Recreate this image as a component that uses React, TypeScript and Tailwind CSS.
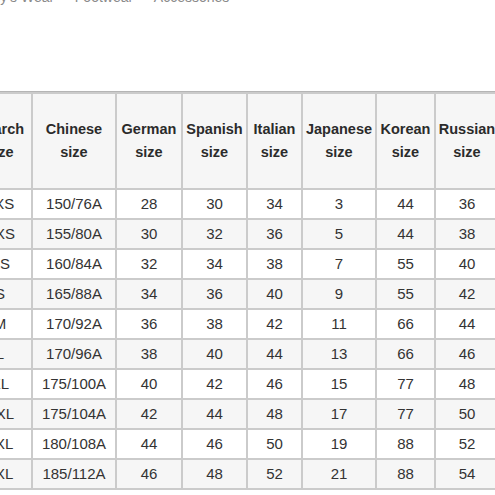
import React from 'react';

const headers = [
  ['Search', 'size'],
  ['Chinese', 'size'],
  ['German', 'size'],
  ['Spanish', 'size'],
  ['Italian', 'size'],
  ['Japanese', 'size'],
  ['Korean', 'size'],
  ['Russian', 'size'],
];

const rows = [
  ['3XS', '150/76A', '28', '30', '34', '3', '44', '36'],
  ['XXS', '155/80A', '30', '32', '36', '5', '44', '38'],
  ['XS', '160/84A', '32', '34', '38', '7', '55', '40'],
  ['S', '165/88A', '34', '36', '40', '9', '55', '42'],
  ['M', '170/92A', '36', '38', '42', '11', '66', '44'],
  ['L', '170/96A', '38', '40', '44', '13', '66', '46'],
  ['XL', '175/100A', '40', '42', '46', '15', '77', '48'],
  ['XXL', '175/104A', '42', '44', '48', '17', '77', '50'],
  ['3XL', '180/108A', '44', '46', '50', '19', '88', '52'],
  ['4XL', '185/112A', '46', '48', '52', '21', '88', '54'],
];

export default function App() {
  return (
    <div className="w-[495px] h-[495px] overflow-hidden bg-white text-[#333] font-['Liberation_Sans',Arial,sans-serif]">
      {/* page is scrolled a little to the right */}
      <div className="-ml-[33px] w-[560px]">
        {/* breadcrumb */}
        <div className="-mt-[13px] pl-[10px] text-[14px] leading-5 text-[#8a8a8a] flex">
          <span>Lady's Wear</span>
          <span className="px-2">·</span>
          <span>Footwear</span>
          <span className="px-2">·</span>
          <span>Accessories</span>
        </div>

        {/* size table */}
        <div className="mt-[84px] grid grid-cols-[62px_82px_64px_63px_53px_72px_57px_62px] gap-[2px] p-[2px] border-t border-[#b5b5b5] bg-[#cbcbcb] w-max">
          {headers.map(([a, b]) => (
            <div
              key={a}
              className="h-[94px] bg-[#f6f6f6] flex flex-col items-center justify-center text-[14.5px] leading-[23px] font-bold text-[#2b2b2b]"
            >
              <span>{a}</span>
              <span>{b}</span>
            </div>
          ))}
          {rows.map((row, i) =>
            row.map((cell, j) => (
              <div
                key={`${i}-${j}`}
                className={`h-[28px] flex items-center justify-center text-[15px] whitespace-nowrap ${
                  i % 2 === 1 ? 'bg-[#f6f6f6]' : 'bg-white'
                }`}
              >
                {cell}
              </div>
            ))
          )}
        </div>
      </div>
    </div>
  );
}
